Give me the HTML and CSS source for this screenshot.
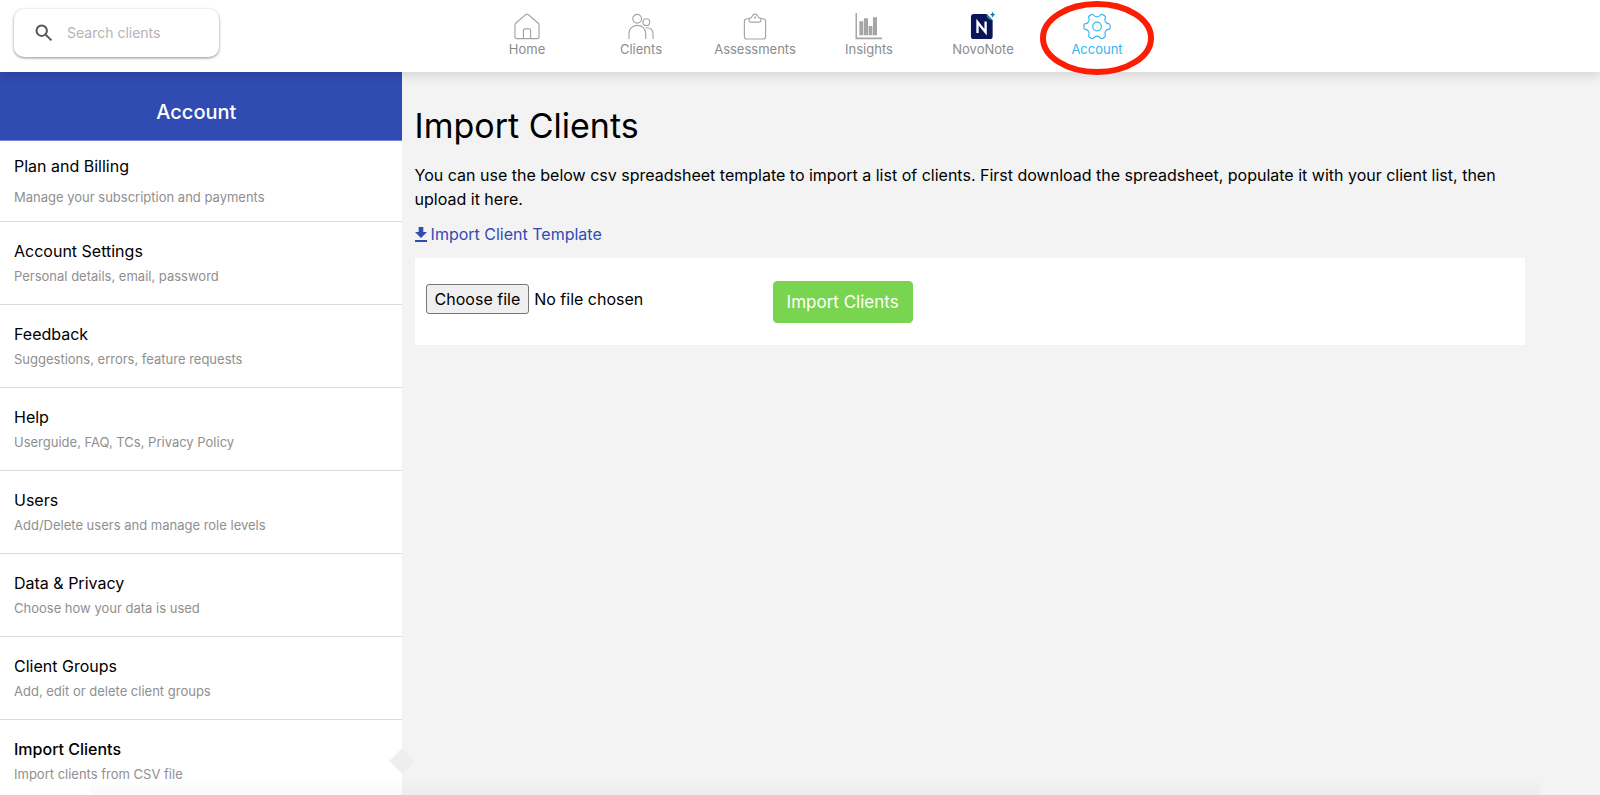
FILE: index.html
```html
<!DOCTYPE html>
<html lang="en">
<head>
<meta charset="utf-8">
<meta name="viewport" content="width=device-width, initial-scale=1">
<title>Import Clients</title>
<link rel="stylesheet" href="styles.css">
</head>
<body>
<header class="topbar">
  <label class="search">
    <svg class="search-icon" viewBox="0 0 18 18" aria-hidden="true"><circle cx="6.7" cy="6.7" r="5.2"/><path d="M10.6 10.6 16.4 16.4"/></svg>
    <input class="search-input" type="search" placeholder="Search clients" aria-label="Search clients">
  </label>
  <nav class="nav">
    <a class="nav-link" href="#home">
      <svg class="nav-icon" viewBox="0 0 28 28"><path d="M1.5 12.2 Q1.500 11.300 2.300 10.600 L12.500 1.800 Q14 .6 15.500 1.800 L25.700 10.600 Q26.500 11.300 26.500 12.200 V24.500 Q26.500 26.500 24.500 26.500 H3.500 Q1.500 26.500 1.500 24.500 Z"/><path d="M10.300 26.500 V18 Q10.300 16.500 11.800 16.500 H16.200 Q17.700 16.500 17.700 18 V26.500"/></svg>
      <span>Home</span>
    </a>
    <a class="nav-link" href="#clients">
      <svg class="nav-icon" viewBox="0 0 28 28"><circle cx="10" cy="6" r="4.500"/><circle cx="19.500" cy="9.500" r="3.500"/><path d="M1.500 27 V21 A8.700 8.200 0 0 1 18.900 21 V27"/><path d="M18.800 15.300 Q26.500 15 26.500 22 V27"/></svg>
      <span>Clients</span>
    </a>
    <a class="nav-link" href="#assessments">
      <svg class="nav-icon" viewBox="0 0 28 28"><path d="M8 6 H5.500 Q3 6 3 8.500 V24.500 Q3 27 5.500 27 H22.500 Q25 27 25 24.500 V8.500 Q25 6 22.500 6 H20"/><path d="M8 5.500 Q10.500 5.500 11.200 3.200 Q12 1.200 14 1.200 Q16 1.200 16.800 3.200 Q17.500 5.500 20 5.500 V8 Q20 9.500 18.500 9.500 H9.500 Q8 9.500 8 8 Z"/><circle cx="14" cy="4.800" r=".5"/></svg>
      <span>Assessments</span>
    </a>
    <a class="nav-link" href="#insights">
      <svg class="nav-icon nav-icon-solid" viewBox="0 0 28 28"><path d="M0 0H1.500V25.500H27.500V27.300H0Z"/><path d="M4 8.500H8V23H4ZM8.700 5.500H13V23H8.700ZM13.600 13.500H17.500V23H13.600ZM18.100 4.500H22.300V23H18.100Z"/></svg>
      <span>Insights</span>
    </a>
    <a class="nav-link" href="#novonote">
      <svg class="nav-icon nav-icon-logo" viewBox="0 0 28 28"><path fill="#0a1557" d="M4.500 1 H18 L24 7.500 V24 Q24 27 21 27 H4.500 Q1.500 27 1.500 24 V4 Q1.500 1 4.500 1Z"/><path fill="#2c8ca0" d="M17.500 1 Q18 7 24 7.800 L18.500 1.500Z"/><path fill="#0b7f97" d="M24 -1.500 L24.900 .9 27 1.700 24.900 2.500 24 4.900 23.100 2.500 21 1.700 23.100 .9Z"/><path stroke="#fff" stroke-width="2.400" d="M8.300 20.800 V9.500 L16.700 20 V8.700"/></svg>
      <span>NovoNote</span>
    </a>
    <a class="nav-link nav-link-active" href="#account" aria-current="page">
      <svg class="nav-icon" viewBox="0 0 28 28">
        <defs><path id="tooth" d="M22.700 9 Q24 11 25.800 11 Q27.600 11 27.600 13 V15 Q27.600 17 25.800 17 Q24 17 22.700 19"/></defs>
        <circle cx="14" cy="14" r="4.500"/>
        <use href="#tooth"/>
        <use href="#tooth" transform="rotate(60 14 14)"/>
        <use href="#tooth" transform="rotate(120 14 14)"/>
        <use href="#tooth" transform="rotate(180 14 14)"/>
        <use href="#tooth" transform="rotate(240 14 14)"/>
        <use href="#tooth" transform="rotate(300 14 14)"/>
      </svg>
      <span>Account</span>
      <svg class="highlight" viewBox="0 0 114 74" aria-hidden="true"><ellipse cx="57" cy="37" rx="54" ry="34"/></svg>
    </a>
  </nav>
</header>
<div class="layout">
  <aside class="sidebar">
    <h2 class="sidebar-title">Account</h2>
    <a class="item item-first" href="#billing"><span class="item-title">Plan and Billing</span><span class="item-note">Manage your subscription and payments</span></a>
    <a class="item" href="#settings"><span class="item-title">Account Settings</span><span class="item-note">Personal details, email, password</span></a>
    <a class="item" href="#feedback"><span class="item-title">Feedback</span><span class="item-note">Suggestions, errors, feature requests</span></a>
    <a class="item" href="#help"><span class="item-title">Help</span><span class="item-note">Userguide, FAQ, TCs, Privacy Policy</span></a>
    <a class="item" href="#users"><span class="item-title">Users</span><span class="item-note">Add/Delete users and manage role levels</span></a>
    <a class="item" href="#privacy"><span class="item-title">Data &amp; Privacy</span><span class="item-note">Choose how your data is used</span></a>
    <a class="item" href="#groups"><span class="item-title">Client Groups</span><span class="item-note">Add, edit or delete client groups</span></a>
    <a class="item item-active" href="#import" aria-current="page"><span class="item-title">Import Clients</span><span class="item-note">Import clients from CSV file</span></a>
  </aside>
  <main class="content">
    <h1 class="page-title">Import Clients</h1>
    <p class="intro">You can use the below csv spreadsheet template to import a list of clients. First download the spreadsheet, populate it with your client list, then upload it here.</p>
    <a class="template-link" href="#template"><svg class="download-icon" viewBox="0 0 12 15" aria-hidden="true"><path d="M3.700 0H8.300V5H12L6 11 0 5H3.700ZM0 13H12V15H0Z"/></svg>Import Client Template</a>
    <form class="import-form">
      <label class="file">
        <input class="file-input" type="file" accept=".csv">
        <span class="file-button">Choose file</span>
        <span>No file chosen</span>
      </label>
      <div><button class="import-button" type="button">Import Clients</button></div>
    </form>
  </main>
</div>
</body>
</html>
```
FILE: styles.css
```css
* {
  box-sizing: border-box;
}

body {
  display: flex;
  flex-direction: column;
  height: 100vh;
  margin: 0;
  overflow: hidden;
  background: #f3f3f3;
  color: #000;
  font: 16px/24px Inter, "Liberation Sans", sans-serif;
}

body::after {
  position: fixed;
  right: 60px;
  bottom: 0;
  left: 90px;
  height: 16px;
  background: linear-gradient(rgba(0, 0, 0, 0), rgba(0, 0, 0, .025));
  content: "";
  pointer-events: none;
}

a {
  color: inherit;
  text-decoration: none;
}

.topbar {
  position: relative;
  z-index: 1;
  display: flex;
  flex: none;
  align-items: flex-start;
  height: 72px;
  padding: 9px 195px 0 14px;
  background: #fff;
  box-shadow: 0 2px 12px rgba(0, 0, 0, .16);
}

.search {
  display: flex;
  align-items: center;
  gap: 14px;
  width: 205px;
  height: 48px;
  padding: 0 20px 0 21px;
  border-radius: 10px;
  background: #fff;
  box-shadow: 0 1px 3px rgba(0, 0, 0, .45);
}

.search-icon {
  flex: none;
  width: 18px;
  height: 18px;
  fill: none;
  stroke: #555;
  stroke-width: 2;
}

.search-input {
  width: 100%;
  min-width: 0;
  padding: 0;
  border: 0;
  outline: 0;
  background: none;
  font: inherit;
  font-size: 14px;
}

.search-input::placeholder {
  color: #b4b4b4;
}

.nav {
  display: flex;
  flex: 1;
  justify-content: center;
}

.nav-link {
  position: relative;
  display: flex;
  flex-direction: column;
  align-items: center;
  width: 114px;
  padding-top: 4px;
  color: #8c8c8c;
  font-size: 13px;
  line-height: 19px;
}

.nav-icon {
  width: 28px;
  height: 27px;
  overflow: visible;
  fill: none;
  stroke: #a5a5a5;
  stroke-width: 1.2;
}

.nav-icon-solid {
  fill: #a5a5a5;
  stroke: none;
}

.nav-icon-logo {
  stroke: none;
}

.nav-link-active {
  color: #35b5f2;
}

.nav-link-active .nav-icon {
  stroke: #35b5f2;
}

.highlight {
  position: absolute;
  top: -8px;
  left: 0;
  width: 114px;
  height: 74px;
  fill: none;
  stroke: #fb1d04;
  stroke-width: 6;
}

.layout {
  display: flex;
  flex: 1;
  min-height: 0;
}

.sidebar {
  flex: none;
  width: 25.1%;
  background: #fff;
}

.sidebar-title {
  margin: 0;
  padding: 26px 9px 14px 0;
  border-bottom: 1px solid #7686cc;
  background: #304bb2;
  color: #fff;
  font-size: 20px;
  font-weight: 500;
  line-height: 28px;
  text-align: center;
}

.item {
  position: relative;
  display: flex;
  flex-direction: column;
  gap: 3px;
  padding: 17px 14px 18px;
  border-bottom: 1px solid #dcdcdc;
}

.item-first {
  gap: 9px;
  padding: 13px 14px 14px;
}

.item-note {
  color: #8f8f8f;
  font-size: 13px;
  line-height: 20px;
}

.item-active .item-title {
  font-weight: 500;
}

.item-active::after {
  position: absolute;
  top: 32px;
  right: -9px;
  width: 18px;
  height: 18px;
  background: #eee;
  content: "";
  transform: rotate(45deg);
}

.content {
  flex: 1;
  padding: 32px 75px 0 13px;
}

.page-title {
  margin: 0 0 15px;
  font-size: 34px;
  font-weight: 400;
  line-height: 44px;
}

.intro {
  margin: 0 0 11px;
}

.template-link {
  display: flex;
  align-items: center;
  gap: 4px;
  color: #304bb2;
}

.download-icon {
  width: 12px;
  height: 15px;
  fill: #304bb2;
}

.import-form {
  display: grid;
  grid-template-columns: 347px 1fr;
  align-items: start;
  margin-top: 12px;
  padding: 23px 11px 22px;
  background: #fff;
}

.file {
  position: relative;
  display: flex;
  align-items: center;
  gap: 5px;
  justify-self: start;
  margin-top: 3px;
}

.file-input {
  position: absolute;
  inset: 0;
  width: 100%;
  opacity: 0;
}

.file-button {
  padding: 2px 8px;
  border: 1px solid #767676;
  border-radius: 3px;
  background: #efefef;
}

.import-button {
  display: block;
  padding: 8px 13px;
  border: 1px solid #76d64e;
  border-radius: 4px;
  background: #79d550;
  color: #fff;
  font: inherit;
  font-size: 17px;
  line-height: 24px;
}
```
